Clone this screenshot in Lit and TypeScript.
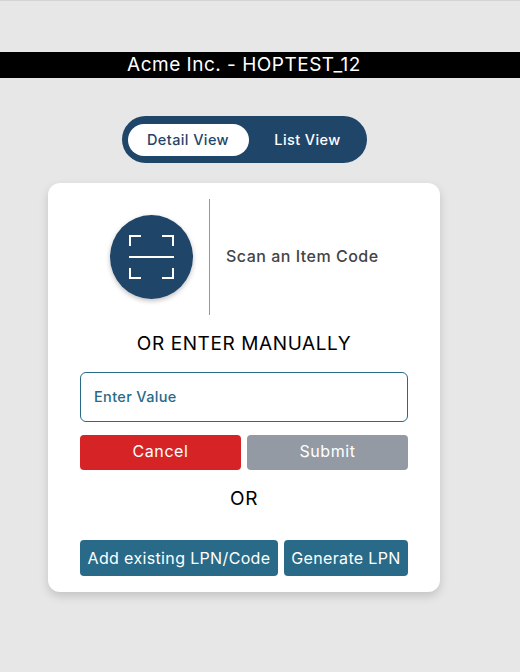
import { LitElement, html, css } from 'lit';
import { customElement } from 'lit/decorators.js';

@customElement('app-root')
export class AppRoot extends LitElement {
  static styles = css`
    :host {
      display: block;
      width: 520px;
      height: 672px;
      overflow: hidden;
      background: #e7e7e7;
      border-top: 1px solid #d4d4d4;
      box-sizing: border-box;
      font-family: Inter, "Open Sans", sans-serif;
    }
    .title {
      margin-top: 51px;
      height: 26px;
      padding-bottom: 1px;
      background: #000;
      color: #fff;
      width: 100%;
      padding-right: 32px;
      box-sizing: border-box;
      display: flex;
      align-items: center;
      justify-content: center;
      font-size: 19px;
      letter-spacing: 0.5px;
      white-space: nowrap;
    }
    .main {
      width: 488px;
      display: flex;
      flex-direction: column;
      align-items: center;
    }
    .toggle {
      margin-top: 38px;
      width: 245px;
      height: 47px;
      box-sizing: border-box;
      padding: 8px 6px 7px;
      border-radius: 24px;
      background: #1f4568;
      display: flex;
      align-items: stretch;
      font-size: 14.5px;
      font-weight: 500;
      letter-spacing: 0.4px;
    }
    .toggle div {
      display: flex;
      align-items: center;
      justify-content: center;
      padding-bottom: 2px;
      box-sizing: border-box;
    }
    .toggle .on {
      width: 121px;
      background: #fff;
      color: #1f4568;
      border-radius: 16px;
    }
    .toggle .off {
      flex: 1;
      color: #fff;
      padding-left: 6px;
    }
    .card {
      margin-top: 20px;
      width: 392px;
      height: 409px;
      box-sizing: border-box;
      padding: 16px 32px;
      background: #fff;
      border-radius: 12px;
      box-shadow: 0 4px 10px rgba(0, 0, 0, 0.16);
      display: flex;
      flex-direction: column;
    }
    .scan {
      display: flex;
      align-items: center;
      height: 116px;
      padding-left: 30px;
    }
    .circle {
      width: 83px;
      height: 84px;
      border-radius: 50%;
      background: #1f4568;
      box-shadow: 0 2px 5px rgba(0, 0, 0, 0.25);
      display: flex;
      align-items: center;
      justify-content: center;
    }
    .divider {
      width: 1px;
      height: 116px;
      margin: 0 16px;
      background: #8f98a3;
    }
    .scan span {
      font-size: 16px;
      font-weight: 500;
      color: #444;
      letter-spacing: 0.5px;
      padding-bottom: 2px;
    }
    .label {
      text-align: center;
      color: #000;
      font-size: 19px;
      letter-spacing: 0.6px;
      line-height: 22px;
    }
    .manual {
      margin-top: 18px;
    }
    .field {
      margin-top: 17px;
      height: 50px;
      box-sizing: border-box;
      border: 1px solid #286a88;
      border-radius: 6px;
      padding: 0 0 2px 13px;
      display: flex;
      align-items: center;
      color: #286a88;
      font-size: 14.5px;
      font-weight: 500;
      letter-spacing: 0.35px;
    }
    .row {
      display: flex;
      gap: 6px;
    }
    .row div {
      display: flex;
      align-items: center;
      justify-content: center;
      border-radius: 4px;
      color: #fff;
      font-size: 16px;
      white-space: nowrap;
    }
    .actions {
      margin-top: 13px;
      height: 35px;
    }
    .actions div {
      flex: 1;
      letter-spacing: 0.6px;
      padding-bottom: 3px;
      box-sizing: border-box;
    }
    .cancel {
      background: #d62426;
    }
    .submit {
      background: #949aa4;
    }
    .or {
      margin-top: 18px;
    }
    .links {
      margin-top: 30px;
      height: 36px;
    }
    .links div {
      background: #286a88;
      letter-spacing: 0.35px;
      padding-bottom: 1px;
      box-sizing: border-box;
    }
    .add {
      width: 198px;
    }
    .generate {
      flex: 1;
    }
  `;

  render() {
    return html`
      <div class="title">Acme Inc. - HOPTEST_12</div>
      <div class="main">
        <div class="toggle">
          <div class="on">Detail View</div>
          <div class="off">List View</div>
        </div>
        <div class="card">
          <div class="scan">
            <div class="circle">
              <svg width="45" height="44" viewBox="0 0 45 44" fill="none" stroke="#fff" stroke-width="2">
                <path d="M1 11V1H12M33 1H44V11M1 33V43H12M33 43H44V33" />
                <path d="M0 22H45" />
              </svg>
            </div>
            <div class="divider"></div>
            <span>Scan an Item Code</span>
          </div>
          <div class="label manual">OR ENTER MANUALLY</div>
          <div class="field">Enter Value</div>
          <div class="row actions">
            <div class="cancel">Cancel</div>
            <div class="submit">Submit</div>
          </div>
          <div class="label or">OR</div>
          <div class="row links">
            <div class="add">Add existing LPN/Code</div>
            <div class="generate">Generate LPN</div>
          </div>
        </div>
      </div>
    `;
  }
}
